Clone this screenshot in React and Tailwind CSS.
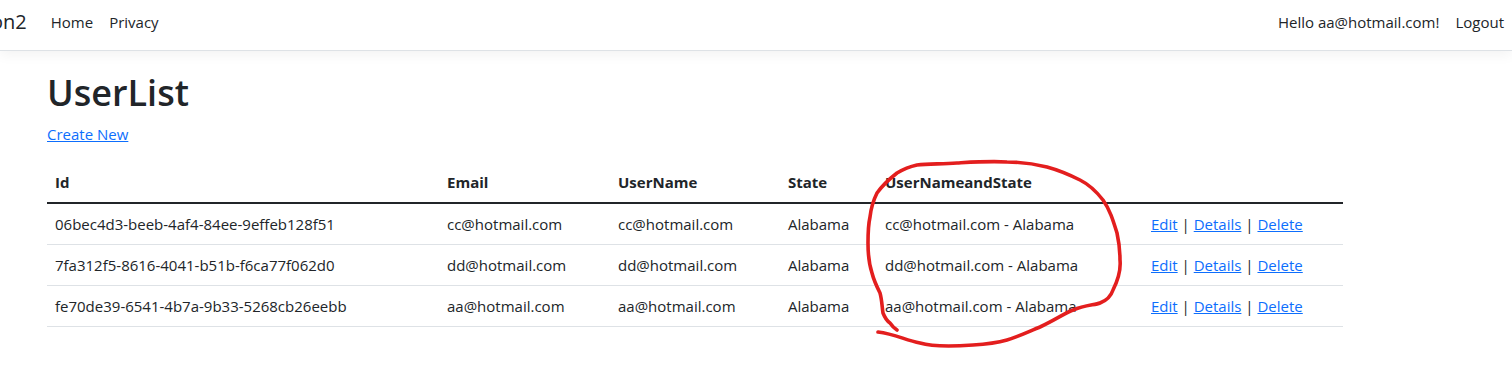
import React from "react"

const users = [
  { id: "06bec4d3-beeb-4af4-84ee-9effeb128f51", email: "cc@hotmail.com" },
  { id: "7fa312f5-8616-4041-b51b-f6ca77f062d0", email: "dd@hotmail.com" },
  { id: "fe70de39-6541-4b7a-9b33-5268cb26eebb", email: "aa@hotmail.com" },
]

function Scribble() {
  return (
    <svg
      className="absolute left-0 top-0 pointer-events-none"
      width="1512"
      height="369"
      viewBox="0 0 1512 369"
      fill="none"
    >
      <path
        d="M878 332 C 895 334, 905 340, 920 343 C 930 346, 945 347, 973 345 C 990 344, 1000 342, 1007 340 C 1020 336, 1030 331, 1040 327 C 1055 320, 1065 313, 1073 310 C 1085 305, 1095 305, 1100 303 C 1108 300, 1111 296, 1113 290 C 1118 280, 1121 270, 1120 260 C 1120 250, 1119 242, 1117 233 C 1113 220, 1110 210, 1103 200 C 1096 191, 1090 185, 1080 180 C 1068 174, 1058 170, 1047 167 C 1035 164, 1020 162, 1007 162 C 990 161, 975 162, 957 163 C 940 164, 928 164, 917 165 C 908 167, 902 170, 897 173 C 888 180, 882 186, 877 193 C 873 201, 871 208, 870 217 C 868 226, 868 235, 868 243 C 868 255, 869 264, 872 273 C 874 281, 877 287, 880 293 C 882 300, 882 307, 883 313 C 885 318, 887 321, 890 323 C 892 326, 894 328, 897 330"
        stroke="#e31e1e"
        strokeWidth="3.6"
        strokeLinecap="round"
        strokeLinejoin="round"
      />
    </svg>
  )
}

export default function App() {
  return (
    <div className="relative w-[1512px] h-[369px] overflow-hidden bg-white text-[#212529] font-['Open_Sans',sans-serif]">
      <nav className="h-[51px] flex items-start justify-between pt-[10px] border-b border-[#dee2e6] shadow-[0_4px_12px_rgba(0,0,0,0.05)] bg-white">
        <div className="flex items-center">
          <span className="-ml-[9px] text-[20px] leading-6 mr-[16px]">on2</span>
          <a className="px-2 text-[15px] leading-6 text-[#212529]">Home</a>
          <a className="px-2 text-[15px] leading-6 text-[#212529]">Privacy</a>
        </div>
        <div className="flex items-center">
          <span className="px-2 text-[15px] leading-6">Hello aa@hotmail.com!</span>
          <a className="px-2 text-[15px] leading-6 text-[#212529]">Logout</a>
        </div>
      </nav>

      <main className="ml-[47px] w-[1296px] pt-[18px]">
        <h1 className="text-[36px] font-semibold leading-[48px] mb-[5px]">UserList</h1>
        <p className="mb-4 text-[15px] leading-6">
          <a className="text-[#0d6efd] underline">Create New</a>
        </p>

        <table className="w-[1296px] table-fixed border-collapse text-[15px] leading-6">
          <colgroup>
            <col className="w-[392px]" />
            <col className="w-[171px]" />
            <col className="w-[170px]" />
            <col className="w-[97px]" />
            <col className="w-[266px]" />
            <col className="w-[200px]" />
          </colgroup>
          <thead>
            <tr className="border-b-2 border-[#212529]">
              <th className="text-left font-bold px-2 py-2">Id</th>
              <th className="text-left font-bold px-2 py-2">Email</th>
              <th className="text-left font-bold px-2 py-2">UserName</th>
              <th className="text-left font-bold px-2 py-2">State</th>
              <th className="text-left font-bold px-2 py-2">UserNameandState</th>
              <th className="px-2 py-2"></th>
            </tr>
          </thead>
          <tbody>
            {users.map((u) => (
              <tr key={u.id} className="border-b border-[#dee2e6]">
                <td className="px-2 py-2">{u.id}</td>
                <td className="px-2 py-2">{u.email}</td>
                <td className="px-2 py-2">{u.email}</td>
                <td className="px-2 py-2">Alabama</td>
                <td className="px-2 py-2">{u.email} - Alabama</td>
                <td className="px-2 py-2 whitespace-nowrap">
                  <a className="text-[#0d6efd] underline">Edit</a> |{" "}
                  <a className="text-[#0d6efd] underline">Details</a> |{" "}
                  <a className="text-[#0d6efd] underline">Delete</a>
                </td>
              </tr>
            ))}
          </tbody>
        </table>
      </main>

      <Scribble />
    </div>
  )
}
